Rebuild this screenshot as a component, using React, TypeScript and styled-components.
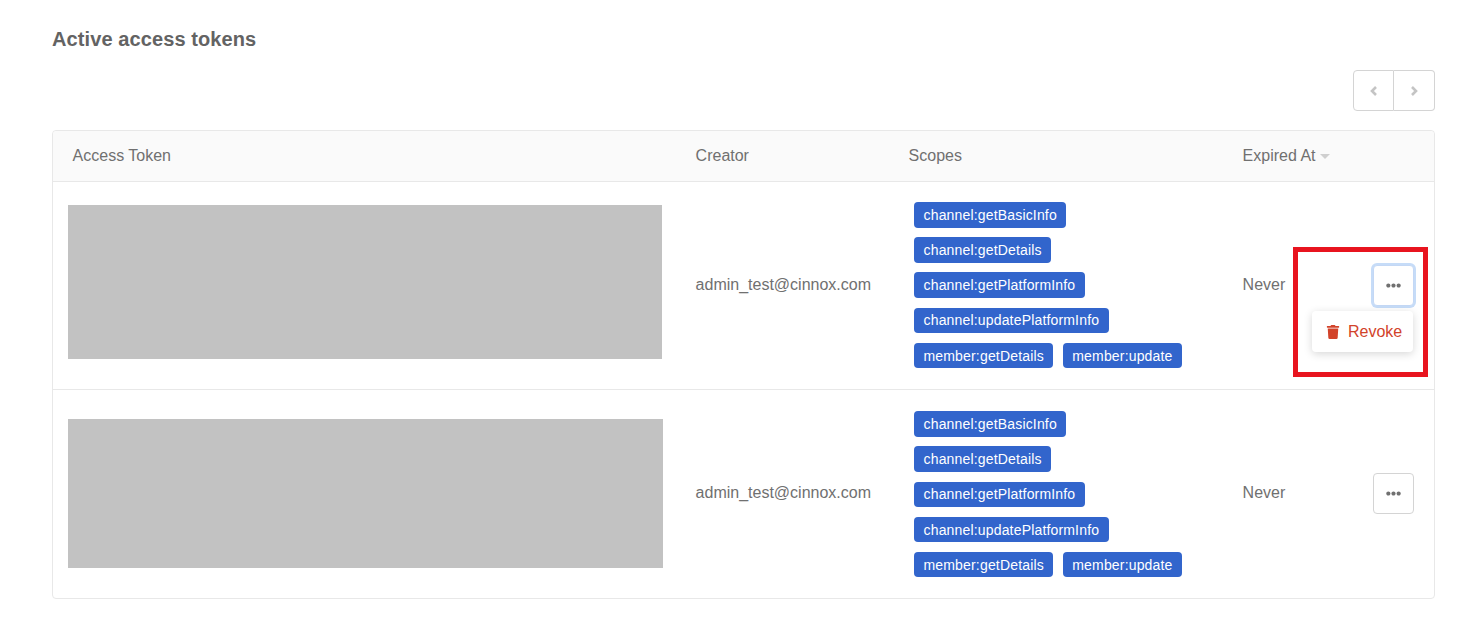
import React from "react";
import styled, { createGlobalStyle } from "styled-components";
import { FaEllipsisH, FaTrash } from "react-icons/fa";

const Global = createGlobalStyle`
  html, body { margin: 0; padding: 0; background: #fff; }
  body { font-family: "Liberation Sans", Arial, sans-serif; color: #666; }
`;

const Page = styled.main`
  position: relative;
  width: 1461px;
  height: 631px;
  box-sizing: border-box;
  padding: 27px 26px 0 52px;
  overflow: hidden;
`;

const Title = styled.h2`
  margin: 0;
  font-size: 20px;
  line-height: 24px;
  font-weight: 700;
  color: #636363;
  letter-spacing: 0.1px;
`;

const Pager = styled.div`
  display: flex;
  justify-content: flex-end;
  margin-top: 19px;
`;

const PageButton = styled.button<{ $side: "left" | "right" }>`
  width: 41px;
  height: 41px;
  padding: 0;
  display: flex;
  align-items: center;
  justify-content: center;
  background: #fff;
  color: #c4c4c4;
  border: 1px solid #d4d4d4;
  border-left-width: ${(p) => (p.$side === "left" ? 1 : 0)}px;
  border-radius: ${(p) => (p.$side === "left" ? "4px 0 0 4px" : "0 4px 4px 0")};
`;

const Table = styled.section`
  margin-top: 19px;
  border: 1px solid #e8e8e8;
  border-radius: 4px;
`;

const columns = "623px 213px 334px 1fr auto";

const HeaderRow = styled.div`
  display: grid;
  grid-template-columns: ${columns};
  height: 50px;
  align-items: center;
  background: #fafafa;
  border-bottom: 1px solid #e8e8e8;
  border-radius: 4px 4px 0 0;
`;

const HeaderCell = styled.div`
  padding-left: 19.6px;
  font-size: 16px;
  line-height: 50px;
  color: #707070;
  display: flex;
  align-items: center;
  gap: 4px;
  white-space: nowrap;
`;

const Row = styled.div<{ $last?: boolean; $top: number; $bottom: number }>`
  display: grid;
  grid-template-columns: ${columns};
  align-items: center;
  padding: ${(p) => p.$top}px 0 ${(p) => p.$bottom}px;
  border-bottom: ${(p) => (p.$last ? "none" : "1px solid #e8e8e8")};
`;

const TextCell = styled.div`
  padding-left: 19.6px;
  font-size: 16px;
  line-height: 20px;
  color: #707070;
`;

const TokenCell = styled.div<{ $shift: number }>`
  padding-left: 15px;
  margin-bottom: ${(p) => p.$shift}px;
`;

const Masked = styled.div<{ $w: number; $h: number }>`
  width: ${(p) => p.$w}px;
  height: ${(p) => p.$h}px;
  background: #c2c2c2;
`;

const Scopes = styled.div<{ $lead: number }>`
  padding: ${(p) => p.$lead}px 0 0 25px;
  display: flex;
  flex-wrap: wrap;
  gap: 9.6px 9.4px;
  width: 290px;
`;

const Tag = styled.span`
  height: 25.6px;
  box-sizing: border-box;
  padding: 0 9.5px;
  display: inline-flex;
  align-items: center;
  background: #3265cc;
  color: #fff;
  border-radius: 4px;
  font-size: 14px;
  letter-spacing: 0.17px;
  white-space: nowrap;
`;

const ActionCell = styled.div`
  position: relative;
  display: flex;
  justify-content: flex-end;
  padding-right: 20px;
`;

const MoreButton = styled.button<{ $focused?: boolean }>`
  width: 41px;
  height: 41px;
  padding: 0;
  display: flex;
  align-items: center;
  justify-content: center;
  background: #fff;
  color: #707070;
  border: 1px solid ${(p) => (p.$focused ? "#c4d8f5" : "#d4d4d4")};
  border-radius: 4px;
  box-shadow: ${(p) => (p.$focused ? "0 0 0 2px #c6dcf8" : "none")};
`;

const Menu = styled.div`
  position: absolute;
  top: 46px;
  right: 21px;
  width: 101px;
  height: 41px;
  box-sizing: border-box;
  padding: 1px 0 0 14px;
  display: flex;
  align-items: center;
  gap: 8px;
  background: #fff;
  color: #d2432a;
  border-radius: 4px;
  font-size: 16px;
  box-shadow: 0 2px 8px rgba(0, 0, 0, 0.16);
`;

const Annotation = styled.div`
  position: absolute;
  left: 1293px;
  top: 247px;
  width: 135px;
  height: 130px;
  box-sizing: border-box;
  border: 5px solid #e8141f;
  pointer-events: none;
`;

const SCOPES = [
  "channel:getBasicInfo",
  "channel:getDetails",
  "channel:getPlatformInfo",
  "channel:updatePlatformInfo",
  "member:getDetails",
  "member:update",
];

function SortCaret() {
  return (
    <svg width="10" height="5" viewBox="0 0 10 5" aria-hidden="true">
      <path d="M0 0h10L5 5z" fill="#cfcfcf" />
    </svg>
  );
}

function Chevron({ dir }: { dir: "left" | "right" }) {
  return (
    <svg width="8" height="10" viewBox="0 0 8 10" aria-hidden="true">
      <path
        d={dir === "left" ? "M6 1L2 5l4 4" : "M2 1l4 4-4 4"}
        fill="none"
        stroke="currentColor"
        strokeWidth="2.6"
      />
    </svg>
  );
}

function TokenRow(props: {
  w: number;
  h: number;
  shift: number;
  top: number;
  bottom: number;
  lead: number;
  last?: boolean;
  open?: boolean;
}) {
  return (
    <Row $last={props.last} $top={props.top} $bottom={props.bottom}>
      <TokenCell $shift={props.shift}>
        <Masked $w={props.w} $h={props.h} />
      </TokenCell>
      <TextCell>admin_test@cinnox.com</TextCell>
      <Scopes $lead={props.lead}>
        {SCOPES.map((s) => (
          <Tag key={s}>{s}</Tag>
        ))}
      </Scopes>
      <TextCell>Never</TextCell>
      <ActionCell>
        <MoreButton $focused={props.open}>
          <FaEllipsisH size={15} />
        </MoreButton>
        {props.open && (
          <Menu>
            <FaTrash size={14} />
            Revoke
          </Menu>
        )}
      </ActionCell>
    </Row>
  );
}

export default function App() {
  return (
    <Page>
      <Global />
      <Title>Active access tokens</Title>
      <Pager>
        <PageButton $side="left">
          <Chevron dir="left" />
        </PageButton>
        <PageButton $side="right">
          <Chevron dir="right" />
        </PageButton>
      </Pager>
      <Table>
        <HeaderRow>
          <HeaderCell>Access Token</HeaderCell>
          <HeaderCell>Creator</HeaderCell>
          <HeaderCell>Scopes</HeaderCell>
          <HeaderCell>
            Expired At
            <SortCaret />
          </HeaderCell>
        </HeaderRow>
        <TokenRow w={594} h={154} shift={7} top={20} bottom={21} lead={0} open />
        <TokenRow w={595} h={149} shift={0} top={19} bottom={20.2} lead={1.8} last />
      </Table>
      <Annotation />
    </Page>
  );
}
